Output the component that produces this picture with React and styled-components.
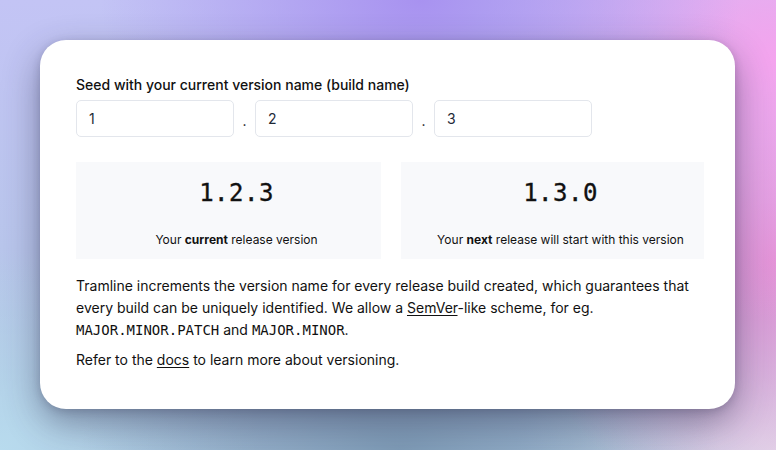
import React from "react";
import styled, { createGlobalStyle } from "styled-components";

const Global = createGlobalStyle`
  html, body { margin: 0; padding: 0; }
  body {
    width: 776px;
    height: 450px;
    overflow: hidden;
    font-family: Inter, "Noto Sans", sans-serif;
    background:
      radial-gradient(ellipse 320px 200px at 420px 0px, #a892f0 0%, rgba(168,146,240,0) 100%),
      radial-gradient(ellipse 300px 260px at 776px 60px, #f4a4ee 0%, rgba(244,164,238,0) 100%),
      radial-gradient(ellipse 260px 260px at 776px 260px, #e08fd2 0%, rgba(224,143,210,0) 100%),
      radial-gradient(ellipse 320px 160px at 400px 450px, #7e9bb6 0%, rgba(126,155,182,0) 100%),
      radial-gradient(ellipse 260px 200px at 0px 450px, #b8dbee 0%, rgba(184,219,238,0) 100%),
      radial-gradient(ellipse 260px 200px at 776px 450px, #e2e6ee 0%, rgba(226,230,238,0) 100%),
      linear-gradient(180deg, #c3c4f5 0%, #b9c6ec 55%, #a9c2dc 100%);
  }
  #root { width: 776px; height: 450px; }
`;

const Stage = styled.div`
  width: 776px;
  height: 450px;
  padding: 40px 41px 41px 40px;
  box-sizing: border-box;
  display: flex;
`;

const Card = styled.div`
  flex: 1;
  background: #fff;
  border-radius: 26px;
  box-shadow: 0 14px 36px rgba(40, 40, 70, 0.45), 0 2px 8px rgba(40, 40, 70, 0.2);
  padding: 36px 31px 0 36px;
  display: flex;
  flex-direction: column;
  color: #111827;
`;

const Label = styled.div`
  font-size: 14px;
  font-weight: 500;
  color: #111;
  line-height: 18px;
  margin-bottom: 6px;
`;

const InputRow = styled.div`
  display: flex;
  align-items: center;
`;

const Field = styled.div`
  width: 158px;
  height: 37px;
  box-sizing: border-box;
  border: 1px solid #e3e6ec;
  border-radius: 5px;
  display: flex;
  align-items: center;
  padding-left: 12px;
  font-size: 14px;
  color: #1f2937;
`;

const Dot = styled.span`
  width: 21px;
  text-align: center;
  font-size: 14px;
  color: #111;
  padding-top: 4px;
`;

const Panels = styled.div`
  display: grid;
  grid-template-columns: 305px 303px;
  gap: 20px;
  margin-top: 25px;
`;

const Panel = styled.div`
  background: #f8f9fb;
  height: 97px;
  box-sizing: border-box;
  padding-left: 16px;
  display: flex;
  flex-direction: column;
  align-items: center;
`;

const Version = styled.div`
  font-family: "DejaVu Sans Mono", "Liberation Mono", monospace;
  font-size: 24px;
  color: #111;
  margin-top: 17px;
  line-height: 28px;
  letter-spacing: 0.5px;
  -webkit-text-stroke: 0.35px #111;
`;

const Caption = styled.div`
  font-size: 12px;
  color: #111;
  margin-top: 25px;
  line-height: 15px;
  b { font-weight: 700; }
`;

const Para = styled.p`
  margin: 16px 0 0 0;
  font-size: 14px;
  line-height: 22px;
  color: #111;
  & + & { margin-top: 8px; }
`;

const Code = styled.code`
  font-family: "DejaVu Sans Mono", "Liberation Mono", monospace;
  font-size: 14px;
`;

const Link = styled.a`
  color: #111;
  text-decoration: underline;
  text-underline-offset: 2px;
`;

export default function App() {
  return (
    <>
      <Global />
      <Stage>
        <Card>
          <Label>Seed with your current version name (build name)</Label>
          <InputRow>
            <Field>1</Field>
            <Dot>.</Dot>
            <Field>2</Field>
            <Dot>.</Dot>
            <Field>3</Field>
          </InputRow>
          <Panels>
            <Panel>
              <Version>1.2.3</Version>
              <Caption>
                Your <b>current</b> release version
              </Caption>
            </Panel>
            <Panel>
              <Version>1.3.0</Version>
              <Caption>
                Your <b>next</b> release will start with this version
              </Caption>
            </Panel>
          </Panels>
          <Para>
            Tramline increments the version name for every release build created, which guarantees that
            every build can be uniquely identified. We allow a <Link>SemVer</Link>-like scheme, for eg.{" "}
            <Code>MAJOR.MINOR.PATCH</Code> and <Code>MAJOR.MINOR</Code>.
          </Para>
          <Para>
            Refer to the <Link>docs</Link> to learn more about versioning.
          </Para>
        </Card>
      </Stage>
    </>
  );
}
